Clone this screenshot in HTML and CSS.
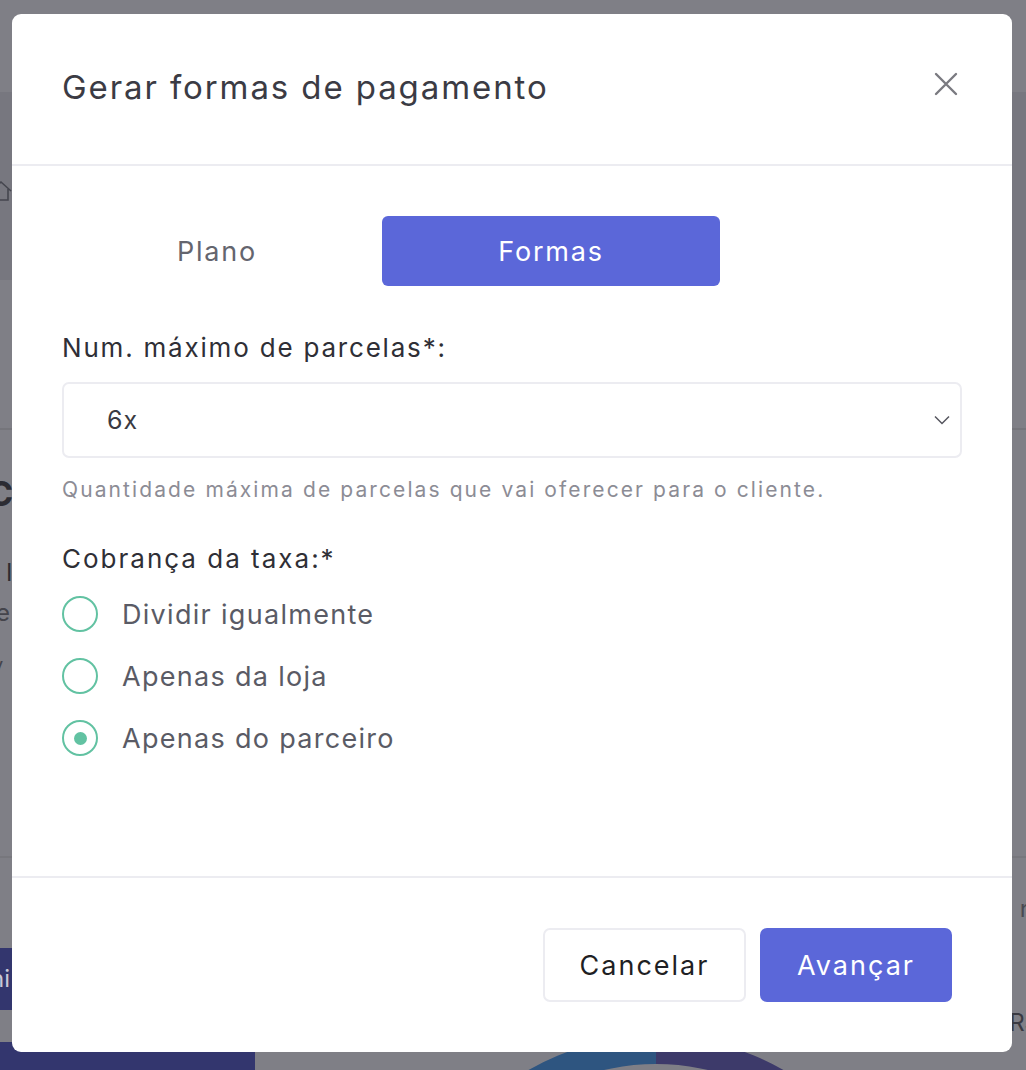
FILE: index.html
```html
<!DOCTYPE html>
<html lang="pt-BR">
<head>
    <meta charset="UTF-8">
    <title>Gerar formas de pagamento</title>
    <meta name="viewport" content="width=device-width, initial-scale=1.0">
    <link rel="stylesheet" href="styles.css">
</head>
<body>
    <!-- pagina atras do overlay -->
    <div class="page">
        <div class="page-top"></div>
        <div class="page-header">
            <svg class="home-icon" width="22" height="22" viewBox="0 0 22 22"><path d="M1 11 L11 2 L21 11 M4 9 V20 H18 V9" fill="none" stroke="#45464f" stroke-width="1.6"/></svg>
        </div>
        <div class="page-section"></div>
        <div class="page-section page-lower">
            <span class="page-edge page-c">C</span>
            <span class="page-edge page-i">I</span>
            <span class="page-edge page-e">e</span>
            <span class="page-edge page-v">v</span>
        </div>
        <div class="page-bottom">
            <span class="page-edge page-n">n</span>
            <span class="page-edge page-rs">R$</span>
            <div class="page-btn">ni</div>
        </div>
        <div class="page-chart"></div>
    </div>

    <div class="modal">
        <div class="modal-header">
            <h2 class="modal-title">Gerar formas de pagamento</h2>
            <button class="close-btn" aria-label="Fechar">
                <svg width="26" height="26" viewBox="0 0 26 26"><path d="M3 3 L23 23 M23 3 L3 23" stroke="#7a7a80" stroke-width="2.4" stroke-linecap="round"/></svg>
            </button>
        </div>

        <div class="modal-body">
            <div class="tabs">
                <div class="tab">Plano</div>
                <div class="tab active">Formas</div>
            </div>

            <label class="field-label">Num. máximo de parcelas*:</label>
            <div class="select">
                <span>6x</span>
                <svg width="16" height="10" viewBox="0 0 16 10"><path d="M1 1.5 L8 8.5 L15 1.5" fill="none" stroke="#55565e" stroke-width="1.5"/></svg>
            </div>
            <p class="hint">Quantidade máxima de parcelas que vai oferecer para o cliente.</p>

            <label class="field-label fee-label">Cobrança da taxa:*</label>
            <div class="radio-group">
                <div class="radio"><span class="radio-dot"></span>Dividir igualmente</div>
                <div class="radio"><span class="radio-dot"></span>Apenas da loja</div>
                <div class="radio checked"><span class="radio-dot"></span>Apenas do parceiro</div>
            </div>
        </div>

        <div class="modal-footer">
            <button class="btn btn-outline">Cancelar</button>
            <button class="btn btn-primary">Avançar</button>
        </div>
    </div>
</body>
</html>
```

FILE: styles.css
```css
:root {
    --primary-color: #5b67d9;
    --green: #62c2a2;
    --divider: #ececf1;
    --overlay: #7f7f86;
}

* {
    margin: 0;
    padding: 0;
    box-sizing: border-box;
}

body {
    font-family: 'Inter', 'Noto Sans', Arial, sans-serif;
    background: var(--overlay);
    width: 1026px;
    height: 1070px;
    overflow: hidden;
    position: relative;
}

/* fundo */
.page {
    height: 1070px;
    display: flex;
    flex-direction: column;
    overflow: hidden;
    position: relative;
}

.page-top {
    height: 92px;
    flex-shrink: 0;
}

.page-header {
    height: 188px;
    flex-shrink: 0;
    background: #77777f;
    padding-top: 88px;
}

.home-icon {
    margin-left: -10px;
}

.page-section {
    height: 150px;
    flex-shrink: 0;
    border-bottom: 2px solid #75757b;
    position: relative;
}

.page-lower {
    height: 428px;
    border-bottom-color: #77777d;
}

.page-edge {
    position: absolute;
    font-size: 24px;
    line-height: 30px;
    color: #2c2c33;
}

.page-c {
    top: 44px;
    left: -12px;
    font-size: 34px;
    line-height: 40px;
    font-weight: 700;
}

.page-i {
    top: 128px;
    left: 6px;
}

.page-e {
    top: 168px;
    left: -4px;
    color: #44444b;
}

.page-v {
    top: 220px;
    left: -8px;
    font-size: 20px;
    color: #44444b;
}

.page-n {
    top: 36px;
    right: -8px;
    color: #4a4a52;
}

.page-rs {
    top: 150px;
    right: -14px;
    color: #3a3a42;
}

.page-bottom {
    flex: 1;
    position: relative;
}

.page-btn {
    margin-top: 90px;
    width: 12px;
    height: 62px;
    background: #33366e;
    color: #c8c8d8;
    font-size: 24px;
    line-height: 62px;
    text-indent: -10px;
    overflow: hidden;
}

.page-bottom::after {
    content: '';
    position: absolute;
    left: 0;
    bottom: 0;
    width: 255px;
    height: 28px;
    background: #33366e;
}

.page-chart {
    position: absolute;
    left: 400px;
    top: 1036px;
    width: 512px;
    height: 512px;
    border-radius: 50%;
    border: 28px solid transparent;
    border-left-color: #2e5580;
    border-top-color: #3d3a6a;
    transform: rotate(45deg);
}

/* modal */
.modal {
    position: absolute;
    top: 14px;
    left: 12px;
    width: 1000px;
    height: 1038px;
    background: #fff;
    border-radius: 9px;
    display: flex;
    flex-direction: column;
}

.modal-header {
    height: 152px;
    padding: 0 50px;
    display: flex;
    align-items: center;
    justify-content: space-between;
    border-bottom: 2px solid var(--divider);
}

.modal-title {
    font-size: 33px;
    font-weight: 400;
    color: #3b3b44;
    letter-spacing: 1.9px;
    margin-top: -4px;
}

.close-btn {
    background: none;
    border: none;
    margin-right: 3px;
    margin-top: -10px;
    display: flex;
}

.modal-body {
    flex: 1;
    padding: 50px 50px 0;
}

.tabs {
    display: flex;
    gap: 10px;
    margin-bottom: 46px;
}

.tab {
    width: 310px;
    height: 70px;
    display: flex;
    align-items: center;
    justify-content: center;
    font-size: 27px;
    letter-spacing: 1.8px;
    color: #64656e;
    border-radius: 6px;
}

.tab.active {
    width: 338px;
    background: var(--primary-color);
    color: #fff;
}

.field-label {
    display: block;
    font-size: 26px;
    letter-spacing: 1.8px;
    color: #2f2f36;
    line-height: 32px;
}

.select {
    margin-top: 18px;
    height: 76px;
    border: 2px solid var(--divider);
    border-radius: 7px;
    display: flex;
    align-items: center;
    justify-content: space-between;
    padding: 0 10px 0 43px;
    font-size: 25px;
    letter-spacing: 1px;
    color: #3a3a42;
}

.hint {
    margin-top: 18px;
    font-size: 21px;
    letter-spacing: 2.1px;
    color: #8c8c95;
    line-height: 28px;
}

.fee-label {
    margin-top: 39px;
    letter-spacing: 2px;
}

.radio-group {
    margin-top: 21px;
    display: flex;
    flex-direction: column;
    gap: 26px;
}

.radio {
    display: flex;
    align-items: center;
    gap: 24px;
    font-size: 27px;
    letter-spacing: 1.3px;
    color: #5a5b65;
    height: 36px;
}

.radio-dot {
    width: 36px;
    height: 36px;
    border-radius: 50%;
    border: 2px solid var(--green);
    display: flex;
    align-items: center;
    justify-content: center;
}

.radio.checked .radio-dot::after {
    content: '';
    width: 13px;
    height: 13px;
    border-radius: 50%;
    background: var(--green);
}

.modal-footer {
    border-top: 2px solid var(--divider);
    padding: 50px 60px 50px 50px;
    display: flex;
    justify-content: flex-end;
    gap: 14px;
}

.btn {
    height: 74px;
    border-radius: 7px;
    font-family: inherit;
    font-size: 27px;
    letter-spacing: 2px;
    cursor: pointer;
}

.btn-outline {
    width: 203px;
    background: #fff;
    border: 2px solid var(--divider);
    color: #1f1f24;
}

.btn-primary {
    width: 192px;
    background: var(--primary-color);
    border: none;
    color: #fff;
}
```
